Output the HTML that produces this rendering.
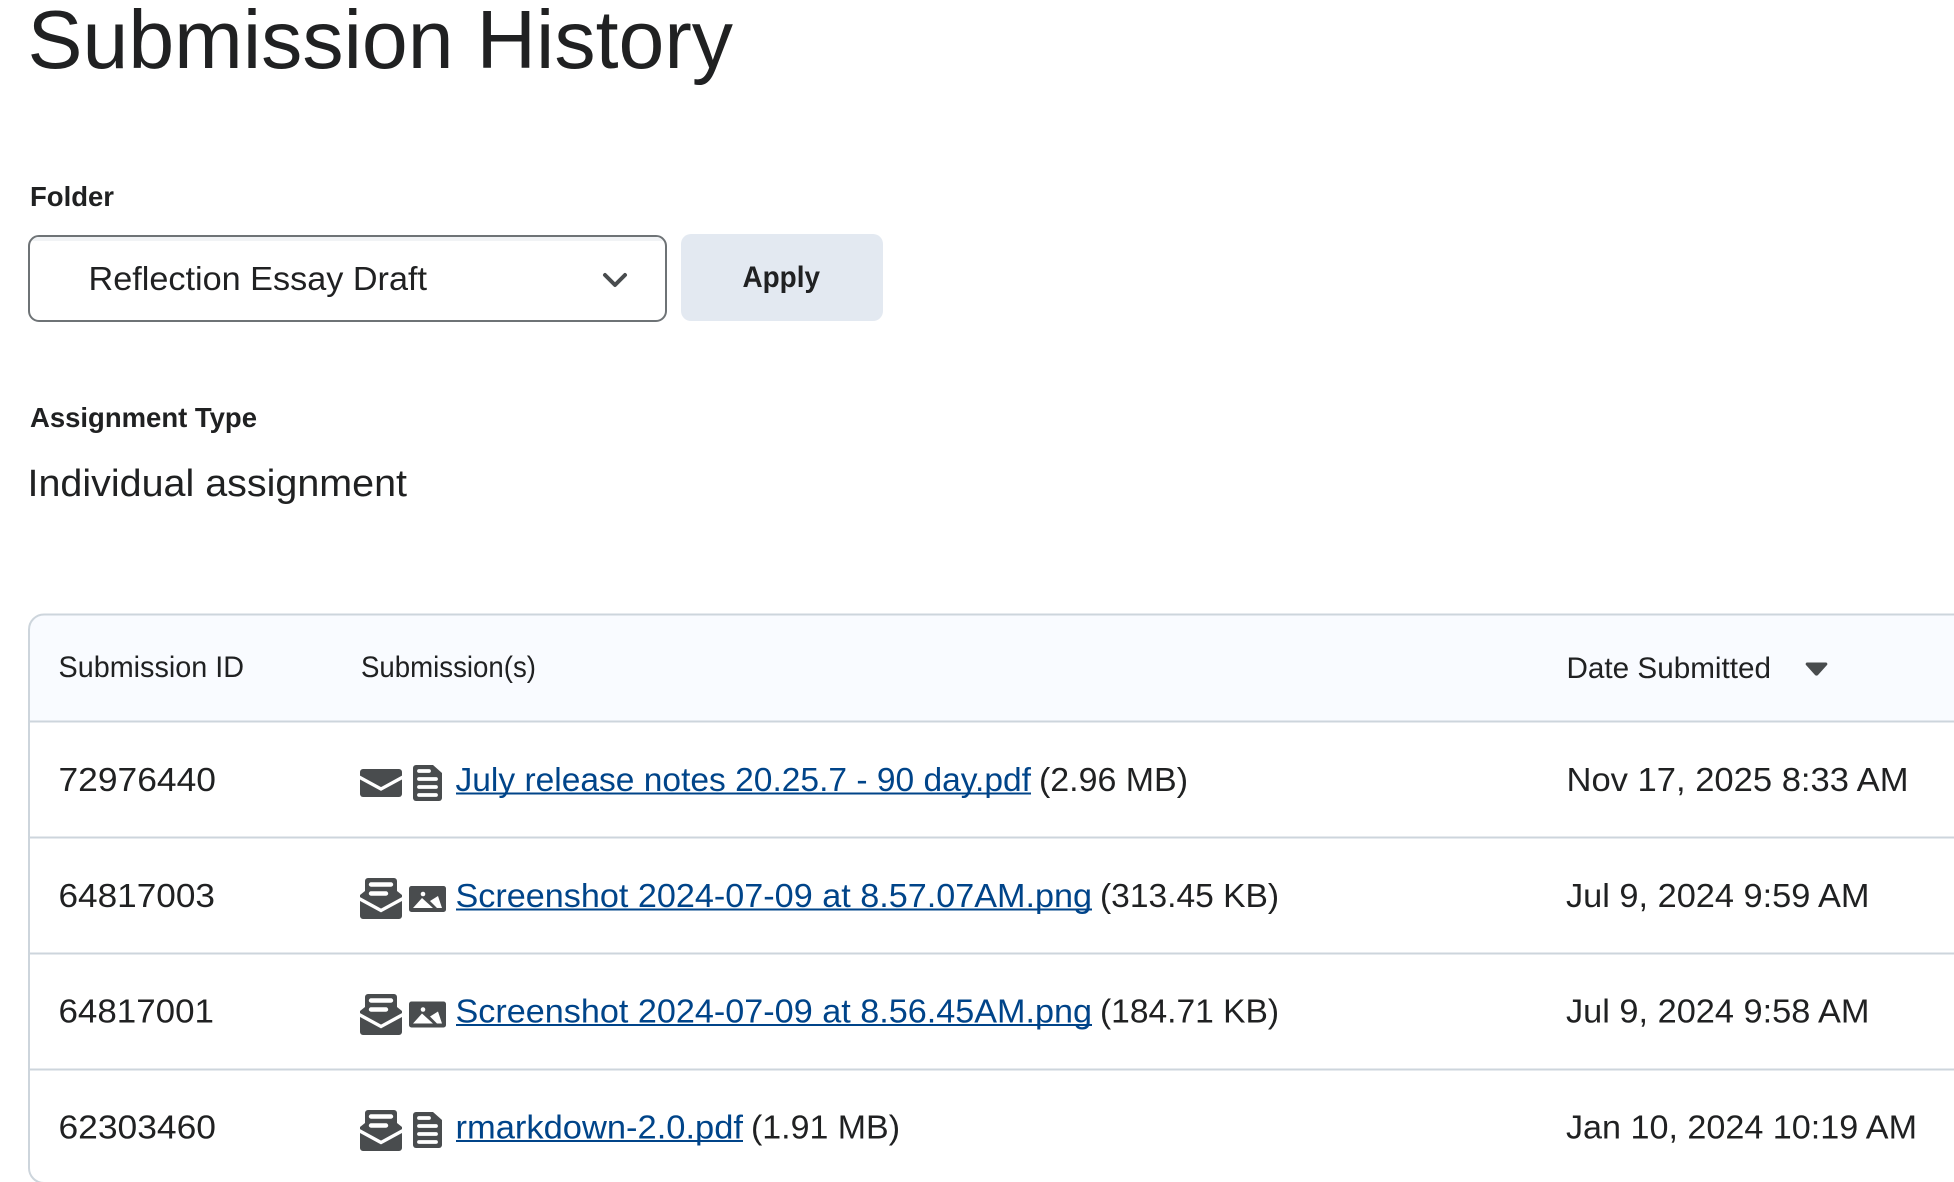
<!DOCTYPE html>
<html lang="en">
<head>
<meta charset="utf-8">
<title>Submission History</title>
<style>
html,body{margin:0;padding:0;background:#fff;width:1954px;height:1182px;overflow:hidden}
svg{display:block;position:absolute;left:0;top:0}
text{font-family:"Liberation Sans",sans-serif;fill:#202122}
.b{font-weight:700}
.l{fill:#004489}
</style>
</head>
<body>
<svg width="1954" height="1182" viewBox="0 0 1954 1182" xmlns="http://www.w3.org/2000/svg">
<defs>
<g id="env">
<rect x="0" y="0" width="42" height="28" rx="3" fill="#494c4e"/>
<path d="M-1 8 L21 20 L43 8" fill="none" stroke="#fff" stroke-width="3.4"/>
</g>
<g id="open">
<path d="M5 3a3 3 0 0 1 3-3h26a3 3 0 0 1 3 3v10l5 4v21a3 3 0 0 1-3 3H3a3 3 0 0 1-3-3V17l5-4z" fill="#494c4e"/>
<path d="M-1 20.5 L21 32.5 L43 20.5" fill="none" stroke="#fff" stroke-width="3.4"/>
<path d="M11 6.5H31M11 15.5H26" fill="none" stroke="#fff" stroke-width="4.4" stroke-linecap="round"/>
</g>
<g id="doc">
<path d="M3 0H20L29 8V33a3 3 0 0 1-3 3H3a3 3 0 0 1-3-3V3a3 3 0 0 1 3-3z" fill="#494c4e"/>
<path d="M6 6H16M6 14H23M6 22H23M6 30H23" fill="none" stroke="#fff" stroke-width="3.8" stroke-linecap="round"/>
</g>
<g id="img">
<rect x="0" y="0" width="37" height="26" rx="2.5" fill="#494c4e"/>
<circle cx="14" cy="8" r="2.3" fill="#fff"/>
<path d="M4 22L13 12L24 22zM21 15L29 10L33 22H28z" fill="#fff"/>
</g>
</defs>

<text x="27.5" y="68" font-size="83" textLength="705.5" lengthAdjust="spacingAndGlyphs">Submission History</text>

<text class="b" x="30" y="206" font-size="27.5" textLength="84" lengthAdjust="spacingAndGlyphs">Folder</text>

<rect x="29" y="236" width="637" height="85" rx="10" fill="#fff" stroke="#6e7376" stroke-width="2"/>
<path d="M32 241a7 7 0 0 1 7-4H656a7 7 0 0 1 7 4z" fill="#f1f3f5"/>
<text x="88.5" y="290" font-size="33" textLength="338.5" lengthAdjust="spacingAndGlyphs">Reflection Essay Draft</text>
<path d="M605 275L615 285L625 275" fill="none" stroke="#494c4e" stroke-width="4" stroke-linecap="round" stroke-linejoin="round"/>

<rect x="681" y="234" width="202" height="87" rx="10" fill="#e3e9f1"/>
<text class="b" x="742.5" y="287" font-size="30" textLength="77.5" lengthAdjust="spacingAndGlyphs">Apply</text>

<text class="b" x="30" y="427" font-size="28" textLength="227" lengthAdjust="spacingAndGlyphs">Assignment Type</text>
<text x="27.5" y="496" font-size="38" textLength="379.5" lengthAdjust="spacingAndGlyphs">Individual assignment</text>

<path d="M1956 614.5H44a15 15 0 0 0-15 15V1168a15 15 0 0 0 15 15H1956z" fill="#fff"/>
<path d="M1956 614.5H44a15 15 0 0 0-15 15V721.5H1956z" fill="#f9fbff"/>
<path d="M1956 614.5H44a15 15 0 0 0-15 15V1168a15 15 0 0 0 15 15" fill="none" stroke="#cdd5dc" stroke-width="2"/>
<path d="M29 721.5H1956M29 837.5H1956M29 953.5H1956M29 1069.5H1956" fill="none" stroke="#cdd5dc" stroke-width="2"/>

<text x="58.5" y="677" font-size="30" textLength="185.5" lengthAdjust="spacingAndGlyphs">Submission ID</text>
<text x="361" y="677" font-size="30" textLength="175" lengthAdjust="spacingAndGlyphs">Submission(s)</text>
<text x="1566.5" y="678" font-size="30" textLength="204.5" lengthAdjust="spacingAndGlyphs">Date Submitted</text>
<path d="M1807 662.5H1826a1.5 1.5 0 0 1 1 2.5L1818 675a2 2 0 0 1-3 0L1806 665a1.5 1.5 0 0 1 1-2.5z" fill="#494c4e"/>

<text x="58.5" y="791" font-size="33" textLength="157.5" lengthAdjust="spacingAndGlyphs">72976440</text>
<use href="#env" x="360" y="769"/>
<use href="#doc" x="413" y="765"/>
<text class="l" x="455.5" y="791" font-size="33.5" textLength="575.5" lengthAdjust="spacingAndGlyphs">July release notes 20.25.7 - 90 day.pdf</text>
<rect x="456" y="792.5" width="575" height="2" fill="#004489"/>
<text x="1039" y="791" font-size="33" textLength="149" lengthAdjust="spacingAndGlyphs">(2.96 MB)</text>
<text x="1566.5" y="791" font-size="33" textLength="342" lengthAdjust="spacingAndGlyphs">Nov 17, 2025 8:33 AM</text>

<text x="58.5" y="907" font-size="33" textLength="156.5" lengthAdjust="spacingAndGlyphs">64817003</text>
<use href="#open" x="360" y="878"/>
<use href="#img" x="409" y="886"/>
<text class="l" x="455.5" y="907" font-size="33.5" textLength="636.5" lengthAdjust="spacingAndGlyphs">Screenshot 2024-07-09 at 8.57.07AM.png</text>
<rect x="456" y="908.5" width="636" height="2" fill="#004489"/>
<text x="1100" y="907" font-size="33" textLength="179" lengthAdjust="spacingAndGlyphs">(313.45 KB)</text>
<text x="1566" y="907" font-size="33" textLength="303.5" lengthAdjust="spacingAndGlyphs">Jul 9, 2024 9:59 AM</text>

<text x="58.5" y="1022.5" font-size="33" textLength="155.5" lengthAdjust="spacingAndGlyphs">64817001</text>
<use href="#open" x="360" y="994"/>
<use href="#img" x="409" y="1001.5"/>
<text class="l" x="455.5" y="1022.5" font-size="33.5" textLength="636.5" lengthAdjust="spacingAndGlyphs">Screenshot 2024-07-09 at 8.56.45AM.png</text>
<rect x="456" y="1024" width="636" height="2" fill="#004489"/>
<text x="1100" y="1022.5" font-size="33" textLength="179" lengthAdjust="spacingAndGlyphs">(184.71 KB)</text>
<text x="1566" y="1022.5" font-size="33" textLength="303.5" lengthAdjust="spacingAndGlyphs">Jul 9, 2024 9:58 AM</text>

<text x="58.5" y="1138.5" font-size="33" textLength="157.5" lengthAdjust="spacingAndGlyphs">62303460</text>
<use href="#open" x="360" y="1110"/>
<use href="#doc" x="413" y="1112"/>
<text class="l" x="455.5" y="1138.5" font-size="33.5" textLength="287.5" lengthAdjust="spacingAndGlyphs">rmarkdown-2.0.pdf</text>
<rect x="456" y="1140" width="287" height="2" fill="#004489"/>
<text x="751" y="1138.5" font-size="33" textLength="149" lengthAdjust="spacingAndGlyphs">(1.91 MB)</text>
<text x="1566" y="1138.5" font-size="33" textLength="351" lengthAdjust="spacingAndGlyphs">Jan 10, 2024 10:19 AM</text>
</svg>
</body>
</html>
